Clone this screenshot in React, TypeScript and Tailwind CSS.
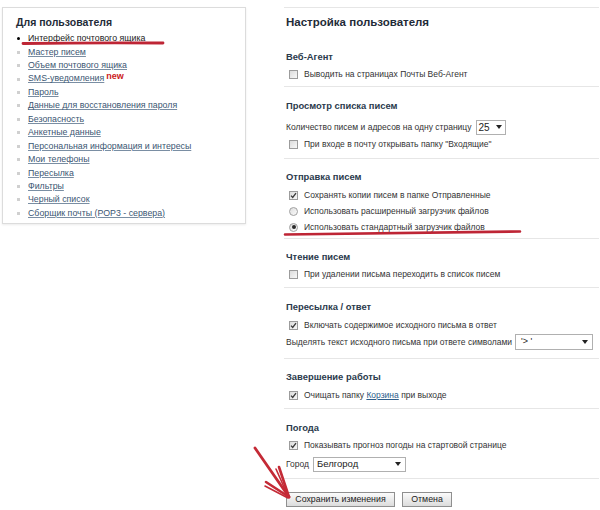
import React from "react";

const font = { fontFamily: '"Liberation Sans", Arial, sans-serif' };

const Cb = ({ checked }: { checked?: boolean }) => (
  <span className="inline-flex w-[9px] h-[9px] shrink-0 border border-[#9c9c9c] bg-linear-to-br from-[#dcdcdc] to-[#f8f8f8] items-center justify-center">
    {checked && (
      <svg width="7" height="7" viewBox="0 0 7 7">
        <path d="M1 3.6 L2.7 5.4 L6 1.2" stroke="#3a3a3a" strokeWidth="1.3" fill="none" />
      </svg>
    )}
  </span>
);

const Radio = ({ checked }: { checked?: boolean }) => (
  <span className="inline-flex w-[9px] h-[9px] shrink-0 rounded-full border border-[#a0a0a0] bg-linear-to-br from-[#dedede] to-[#fafafa] items-center justify-center">
    {checked && <span className="w-[4px] h-[4px] rounded-full bg-[#2a2a2a]" />}
  </span>
);

const Tri = () => (
  <svg width="6" height="4" viewBox="0 0 6 4">
    <path d="M0 0 L6 0 L3 4 Z" fill="#222" />
  </svg>
);

const Row = ({ children, cls = "" }: { children: React.ReactNode; cls?: string }) => (
  <div className={"h-[16px] flex items-center pl-[3px] gap-[6px] text-[8.5px] text-[#333] whitespace-nowrap " + cls}>{children}</div>
);

const H = ({ children }: { children: React.ReactNode }) => (
  <div className="h-[14px] leading-[14px] text-[9.4px] font-bold text-[#2b3a4c]">{children}</div>
);

const links = [
  "Мастер писем",
  "Объем почтового ящика",
  "SMS-уведомления",
  "Пароль",
  "Данные для восстановления пароля",
  "Безопасность",
  "Анкетные данные",
  "Персональная информация и интересы",
  "Мои телефоны",
  "Пересылка",
  "Фильтры",
  "Черный список",
  "Сборщик почты (POP3 - сервера)",
];

export default function App() {
  return (
    <div className="relative w-[600px] h-[510px] bg-white overflow-hidden" style={font}>
      <div className="flex items-start">
        {/* Left box */}
        <div className="ml-[2px] mt-[7px] w-[244px] border border-[#dcdcdc] shadow-[0_1px_2px_rgba(0,0,0,0.08)] pt-[7px] pb-[3px] pl-[13px]">
          <div className="h-[14px] leading-[14px] text-[10.5px] font-bold text-[#1f2b38]">Для пользователя</div>
          <ul className="mt-[3px]">
            <li className="h-[13.45px] flex items-center">
              <span className="w-[3px] h-[3px] rounded-full bg-black ml-[1px] mr-[8px]" />
              <span className="text-[8.8px] text-[#222] underline underline-offset-1">Интерфейс почтового ящика</span>
            </li>
            {links.map((l) => (
              <li key={l} className="h-[13.45px] flex items-center">
                <span className="w-[3px] h-[3px] bg-[#d0d0d0] ml-[1px] mr-[8px]" />
                <span className="text-[8.8px] text-[#3b5672] underline underline-offset-1 decoration-[#7a8ea3]">{l}</span>
                {l === "SMS-уведомления" && (
                  <span className="ml-[2px] -mt-[5px] text-[9px] font-bold text-[#cc2222]">new</span>
                )}
              </li>
            ))}
          </ul>
        </div>

        {/* Right column */}
        <div className="ml-[38px] w-[315px] mt-[7px]">
          <div className="border-t border-[#e6e6e6] pt-[4px] mb-[6px] pl-[2px]">
            <div className="h-[20px] leading-[20px] text-[11.5px] font-bold text-[#1f2b38]">Настройка пользователя</div>
          </div>

          {/* Веб-Агент */}
          <div className="pl-[2px] pt-[12px] pb-[4px] border-b border-[#e6e6e6]">
            <H>Веб-Агент</H>
            <Row cls="mt-[2px]">
              <Cb />
              <span>Выводить на страницах Почты Веб-Агент</span>
            </Row>
          </div>

          {/* Просмотр */}
          <div className="pl-[2px] pt-[12px] pb-[6px] border-b border-[#e6e6e6]">
            <H>Просмотр списка писем</H>
            <div className="mt-[5px] h-[18px] flex items-center text-[8.5px] text-[#333] whitespace-nowrap">
              <span>Количество писем и адресов на одну страницу</span>
              <span className="ml-[4px] inline-flex items-center justify-between w-[30px] h-[15px] border border-[#b0b0b0] bg-white pl-[2px] pr-[3px] text-[10px] text-[#222]">
                25
                <Tri />
              </span>
            </div>
            <Row>
              <Cb />
              <span>При входе в почту открывать папку "Входящие"</span>
            </Row>
          </div>

          {/* Отправка */}
          <div className="pl-[2px] pt-[11px] pb-[3px] border-b border-[#e6e6e6]">
            <H>Отправка писем</H>
            <Row cls="mt-[3px]">
              <Cb checked />
              <span>Сохранять копии писем в папке Отправленные</span>
            </Row>
            <Row>
              <Radio />
              <span>Использовать расширенный загрузчик файлов</span>
            </Row>
            <Row cls="h-[15px]">
              <Radio checked />
              <span>Использовать стандартный загрузчик файлов</span>
            </Row>
          </div>

          {/* Чтение */}
          <div className="pl-[2px] pt-[11px] pb-[5px] border-b border-[#e6e6e6]">
            <H>Чтение писем</H>
            <Row cls="mt-[2px]">
              <Cb />
              <span>При удалении письма переходить в список писем</span>
            </Row>
          </div>

          {/* Пересылка */}
          <div className="pl-[2px] pt-[12px] pb-[7px] border-b border-[#e6e6e6]">
            <H>Пересылка / ответ</H>
            <Row cls="mt-[3px]">
              <Cb checked />
              <span>Включать содержимое исходного письма в ответ</span>
            </Row>
            <div className="h-[18px] flex items-center text-[8.5px] text-[#333] whitespace-nowrap">
              <span>Выделять текст исходного письма при ответе символами</span>
              <span className="ml-[3px] inline-flex items-center justify-between w-[78px] h-[16px] border border-[#b0b0b0] bg-white pl-[5px] pr-[4px] text-[9px] text-[#222]">
                '&gt; '
                <Tri />
              </span>
            </div>
          </div>

          {/* Завершение */}
          <div className="pl-[2px] pt-[11px] pb-[5px] border-b border-[#e6e6e6]">
            <H>Завершение работы</H>
            <Row cls="mt-[3px]">
              <Cb checked />
              <span>
                Очищать папку <span className="text-[#2e5d8a] underline">Корзина</span> при выходе
              </span>
            </Row>
          </div>

          {/* Погода */}
          <div className="pl-[2px] pt-[12px] pb-[5px] border-b border-[#e6e6e6]">
            <H>Погода</H>
            <Row cls="mt-[2px]">
              <Cb checked />
              <span>Показывать прогноз погоды на стартовой странице</span>
            </Row>
            <div className="mt-[2px] h-[18px] flex items-center text-[8.5px] text-[#333] whitespace-nowrap">
              <span>Город</span>
              <span className="ml-[4px] inline-flex items-center justify-between w-[93px] h-[15px] border border-[#b0b0b0] bg-white pl-[3px] pr-[4px] text-[9.5px] text-[#222]">
                Белгород
                <Tri />
              </span>
            </div>
          </div>

          {/* Buttons */}
          <div className="pl-[2px] mt-[13px] flex gap-[7px]">
            <button className="w-[109px] h-[15px] border border-[#8f8f8f] bg-linear-to-b from-[#fbfbfb] to-[#dcdcdc] text-[8.8px] text-[#222] leading-[13px]">
              Сохранить изменения
            </button>
            <button className="w-[50px] h-[15px] border border-[#8f8f8f] bg-linear-to-b from-[#fbfbfb] to-[#dcdcdc] text-[8.8px] text-[#222] leading-[13px]">
              Отмена
            </button>
          </div>
        </div>
      </div>

      {/* Red marker annotations */}
      <svg className="absolute left-0 top-0 pointer-events-none" width="600" height="510" viewBox="0 0 600 510">
        <path d="M23 43.5 Q90 42.5 163 43" stroke="#be2535" strokeWidth="2.8" fill="none" strokeLinecap="round" />
        <path d="M285 234.5 Q400 233.5 520 231.5" stroke="#be2535" strokeWidth="2.6" fill="none" strokeLinecap="round" />
        <path d="M255 448 L289 497" stroke="#c42a36" strokeWidth="2.8" fill="none" strokeLinecap="round" />
        <path d="M279 467 L289 497" stroke="#c42a36" strokeWidth="2.6" fill="none" strokeLinecap="round" />
        <path d="M276 469 L288 496" stroke="#c42a36" strokeWidth="1.6" fill="none" strokeLinecap="round" />
        <path d="M266 482 L289 497" stroke="#c42a36" strokeWidth="2.6" fill="none" strokeLinecap="round" />
        <path d="M265 486 L288 498" stroke="#c42a36" strokeWidth="1.6" fill="none" strokeLinecap="round" />
      </svg>
    </div>
  );
}
